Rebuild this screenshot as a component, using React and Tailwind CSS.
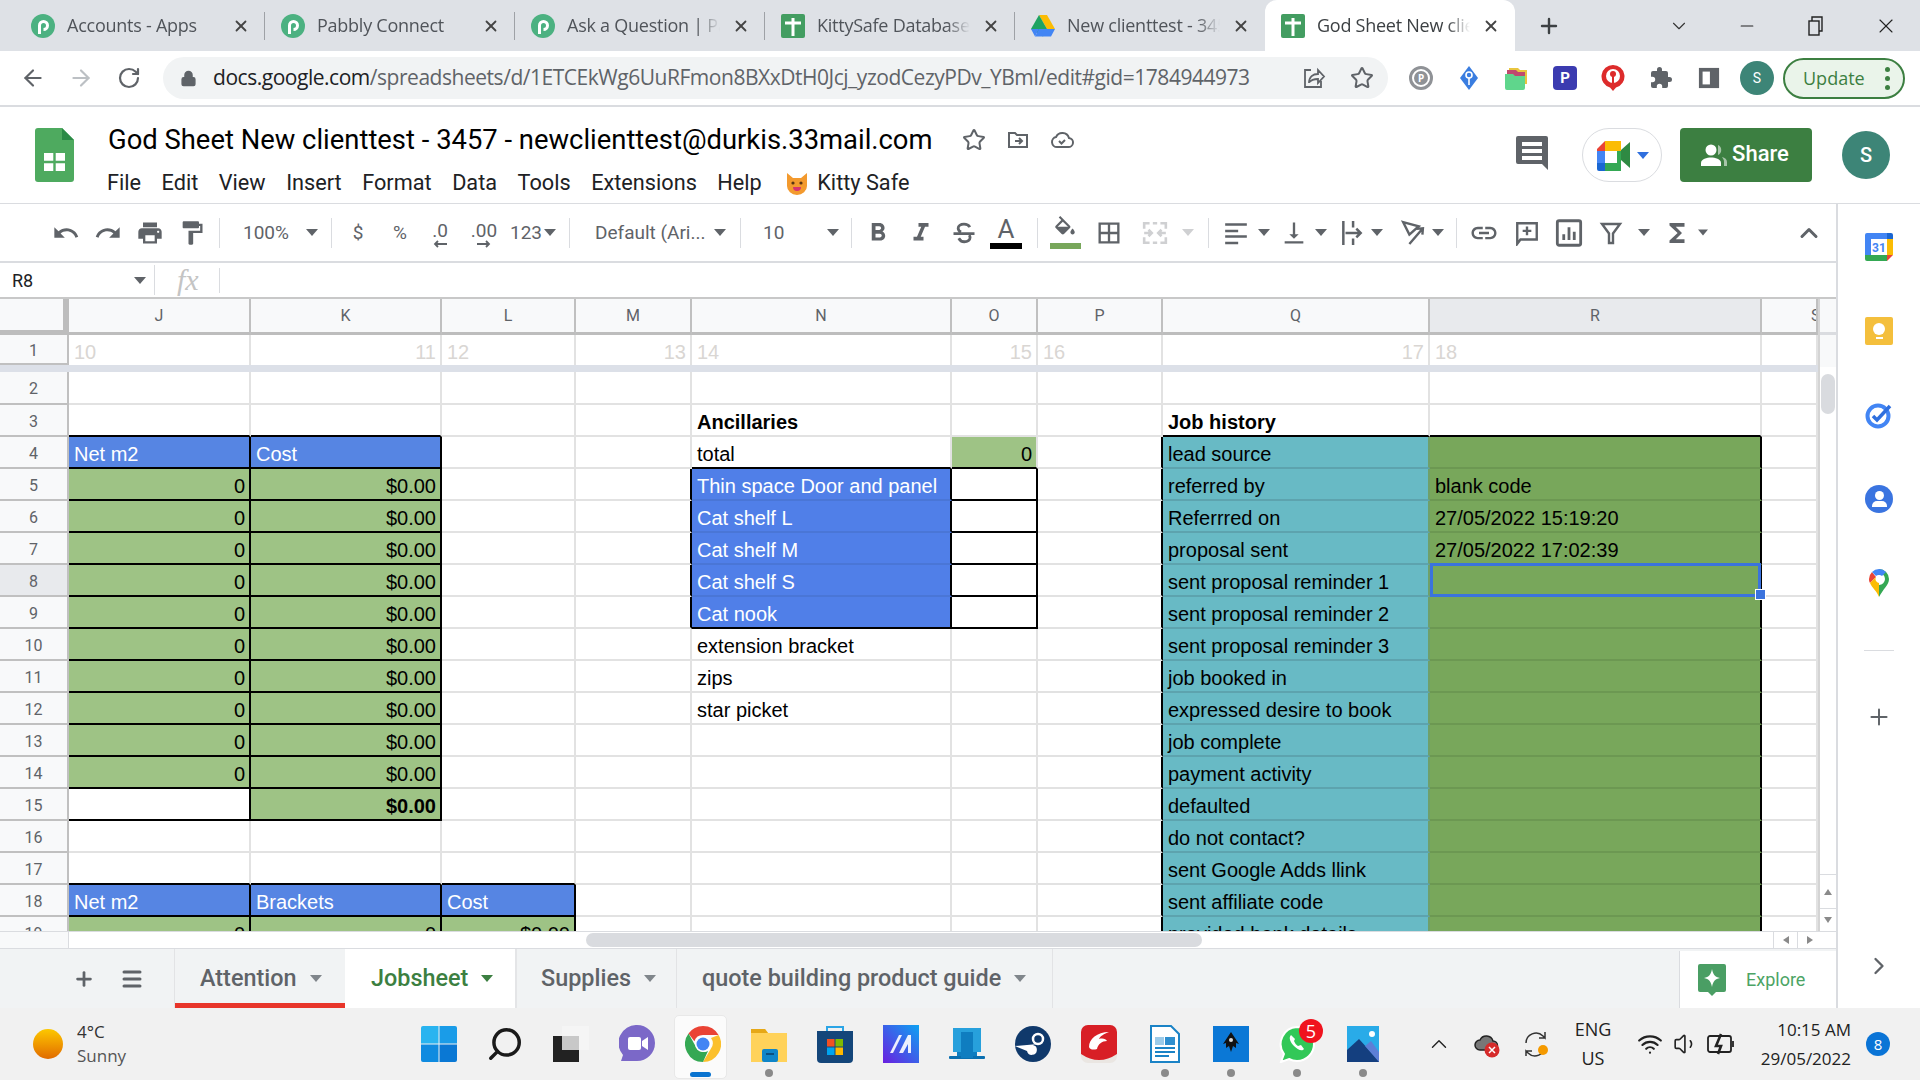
import React from "react";
import { Plus, X, ChevronDown, ChevronUp, ChevronRight, Minus, ArrowLeft, ArrowRight, RotateCw, Star, Lock, Search, Wifi, Volume1, Menu } from "lucide-react";

const ui = "font-['Open_Sans',sans-serif]";
const rob = "font-['Roboto',sans-serif]";
const ar = "font-['Liberation_Sans',Arial,sans-serif]";

// ---------- small drawn icons ----------
const M = ({ d, className = "w-[24px] h-[24px]", fill = "#5f6368" }) => (
  <svg viewBox="0 0 24 24" className={className} fill={fill}>
    <path d={d} />
  </svg>
);

const Caret = ({ fill = "#5f6368" }) => (
  <svg viewBox="0 0 12 7" className="w-[12px] h-[7px]" fill={fill}>
    <path d="M0 0h12L6 7z" />
  </svg>
);

const TinyArrow = ({ d }) => (
  <svg viewBox="0 0 8 8" className="w-[8px] h-[8px]" fill="#8a8a8a">
    <path d={d} />
  </svg>
);

const Pabbly = () => (
  <svg viewBox="0 0 24 24" className="w-[24px] h-[24px] shrink-0">
    <circle cx="12" cy="12" r="12" fill="#4cb181" />
    <path d="M8.5 20V11.5a4 4 0 1 1 4 4" fill="none" stroke="#fff" strokeWidth="3" />
  </svg>
);

const SheetFav = () => (
  <svg viewBox="0 0 24 24" className="w-[24px] h-[24px] shrink-0">
    <rect width="24" height="24" rx="2" fill="#439d61" />
    <path d="M4 9h16M12 4v18" stroke="#fff" strokeWidth="3" />
  </svg>
);

const Drive = () => (
  <svg viewBox="0 0 24 22" className="w-[24px] h-[24px] shrink-0">
    <path d="M8 0h8l8 14h-8z" fill="#fbbc04" />
    <path d="M8 0l8 14-4 7.5L0 14z" fill="#1ea362" />
    <path d="M4 21.5L8 14h16l-4 7.5z" fill="#4285f4" />
    <path d="M0 14h8l-4 7.5z" fill="#4285f4" />
  </svg>
);

const Tab = ({ icon, title, active, sep = true }) => (
  <div className={`w-[250px] h-[51px] shrink-0 relative flex items-center pl-[16px] ${active ? "bg-white rounded-t-[12px]" : ""}`}>
    {icon}
    <div className={`ml-[12px] w-[153px] overflow-hidden whitespace-nowrap text-[18px] tracking-[-0.25px] [mask-image:linear-gradient(to_right,black_85%,transparent)] ${ui} ${active ? "text-[#3c4043]" : "text-[#50545a]"}`}>{title}</div>
    <X size={18} strokeWidth={2.4} className="ml-[12px] text-[#444]" />
    {sep && <div className="absolute right-0 top-[12px] w-px h-[28px] bg-[#9ea1a6]" />}
  </div>
);

const Slot = ({ className, children }) => (
  <div className={`h-[42px] flex items-center justify-center shrink-0 ${className}`}>{children}</div>
);

const Sep = ({ className }) => <div className={`w-px h-[30px] bg-[#dadce0] shrink-0 ${className}`} />;

const ToolText = ({ children }) => <span className={`text-[19px] leading-[24px] text-[#5f6368] pt-[1px] ${rob}`}>{children}</span>;

const Ext = ({ children }) => <div className="w-[48px] h-[42px] flex items-center justify-center shrink-0">{children}</div>;

// ---------- spreadsheet data ----------
const cols = ["J", "K", "L", "M", "N", "O", "P", "Q", "R", "S"];
const rowNums = Array.from({ length: 19 }, (_, i) => i + 1);
const jobLabels = {
  4: "lead source", 5: "referred by", 6: "Referrred on", 7: "proposal sent", 8: "sent proposal reminder 1",
  9: "sent proposal reminder 2", 10: "sent proposal reminder 3", 11: "job booked in", 12: "expressed desire to book",
  13: "job complete", 14: "payment activity", 15: "defaulted", 16: "do not contact?", 17: "sent Google Adds llink",
  18: "sent affiliate code", 19: "provided bank details",
};

const cellInfo = (c, r) => {
  const info = { text: "", bg: "", right: false, fg: "text-black", bold: false };
  const inTop = r >= 4 && r <= 15;
  const inLow = r === 18 || r === 19;
  if (c === "J" || c === "K") {
    if (r === 4 || r === 18) { info.bg = "bg-[#5685e3]"; info.fg = "text-white"; }
    if ((r >= 5 && r <= 14) || r === 19) { info.bg = "bg-[#9ec385]"; info.text = c === "K" && r !== 19 ? "$0.00" : "0"; info.right = true; }
  }
  if (c === "J" && (r === 4 || r === 18)) info.text = "Net m2";
  if (c === "K" && r === 4) info.text = "Cost";
  if (c === "K" && r === 18) info.text = "Brackets";
  if (c === "K" && r === 15) { info.bg = "bg-[#9ec385]"; info.text = "$0.00"; info.right = true; info.bold = true; }
  if (c === "L" && r === 18) { info.bg = "bg-[#5685e3]"; info.fg = "text-white"; info.text = "Cost"; }
  if (c === "L" && r === 19) { info.bg = "bg-[#9ec385]"; info.text = "$0.00"; info.right = true; }
  if (c === "N") {
    if (r === 3) { info.text = "Ancillaries"; info.bold = true; }
    if (r === 4) info.text = "total";
    if (r >= 5 && r <= 9) {
      info.bg = "bg-[#507fe8]"; info.fg = "text-white";
      info.text = ["Thin space Door and panel", "Cat shelf L", "Cat shelf M", "Cat shelf S", "Cat nook"][r - 5];
    }
    if (r === 10) info.text = "extension bracket";
    if (r === 11) info.text = "zips";
    if (r === 12) info.text = "star picket";
  }
  if (c === "O" && r === 4) { info.bg = "bg-[#9ec385]"; info.text = "0"; info.right = true; }
  if (c === "Q") {
    if (r === 3) { info.text = "Job history"; info.bold = true; }
    if (r >= 4) { info.bg = "bg-[#68bac5]"; info.text = jobLabels[r]; }
  }
  if (c === "R" && r >= 4) {
    info.bg = "bg-[#78a75b]";
    if (r === 5) info.text = "blank code";
    if (r === 6) info.text = "27/05/2022 15:19:20";
    if (r === 7) info.text = "27/05/2022 17:02:39";
  }
  // border colours
  let rb = "border-r-[#e2e2e2]";
  let bb = "border-b-[#e2e2e2]";
  if (c === "Q" && r >= 4) { rb = "border-r-[#6fa06a]"; bb = "border-b-[#5da3ae]"; }
  if (c === "R" && r >= 4) { bb = "border-b-[#6c9852]"; }
  if (c === "N" && r >= 5 && r <= 8) bb = "border-b-[#4a76d6]";
  const blackRight =
    ((c === "J" || c === "K") && (inTop || inLow)) || (c === "L" && inLow) || (c === "M" && r >= 5 && r <= 9) ||
    ((c === "N" || c === "O") && r >= 5 && r <= 9) || (c === "P" && r >= 4) || (c === "R" && r >= 4);
  const blackBottom =
    ((c === "J" || c === "K") && (r === 3 || (r >= 4 && r <= 15) || r === 17 || r === 18)) ||
    (c === "L" && (r === 17 || r === 18)) || ((c === "N" || c === "O") && r === 4) || (c === "N" && r === 9) ||
    (c === "O" && r >= 5 && r <= 9) || ((c === "Q" || c === "R") && r === 3);
  if (blackRight) rb = "border-r-black";
  if (blackBottom) bb = "border-b-black";
  return { ...info, rb, bb };
};

const rowHeight = (r) => (r === 1 ? "h-[30px]" : r === 2 ? "h-[33px]" : "h-[32px]");

const Grid = () => (
  <div className="h-[632px] w-[1818px] overflow-hidden grid grid-cols-[69px_182px_191px_134px_116px_260px_86px_125px_267px_332px_56px] auto-rows-min">
    <div className="h-[36px] bg-[#f8f9fa] border-r-[6px] border-b-[5px] border-[#bdbdbd]" />
    {cols.map((c) => (
      <div
        key={c}
        className={`h-[36px] flex items-center overflow-hidden border-r-2 border-b-[3px] border-r-[#c0c0c0] border-b-[#bdbdbd] text-[16px] text-[#5f6368] ${rob} ${c === "R" ? "bg-[#e8eaed]" : "bg-[#f8f9fa]"} ${c === "S" ? "justify-start pl-[49px] border-r-0" : "justify-center"}`}
      >
        {c}
      </div>
    ))}
    {rowNums.map((r) => (
      <React.Fragment key={r}>
        {r === 2 && <div className="col-span-11 h-[7px] bg-[#dce0e8]" />}
        <div className={`${rowHeight(r)} flex items-center justify-center pt-[3px] border-r-2 border-b-2 border-[#c0c0c0] text-[16px] text-[#5f6368] ${rob} ${r === 8 ? "bg-[#e8eaed]" : "bg-[#f8f9fa]"}`}>
          {r}
        </div>
        {cols.map((c, ci) => {
          if (r === 1) {
            const n = 10 + ci;
            return (
              <div key={c} className={`h-[30px] flex items-end pb-[1px] overflow-hidden border-r-2 border-[#e2e2e2] text-[20px] leading-[24px] text-[#d9d6d3] ${ar} ${ci % 2 ? "justify-end pr-[4px]" : "pl-[5px]"}`}>
                {c === "S" ? "" : n}
              </div>
            );
          }
          const cell = cellInfo(c, r);
          return (
            <div
              key={c}
              className={`${rowHeight(r)} relative flex items-end pb-[1px] whitespace-nowrap border-r-2 border-b-2 text-[20px] leading-[24px] ${ar} ${cell.bg} ${cell.fg} ${cell.rb} ${cell.bb} ${cell.right ? "justify-end pr-[4px]" : "pl-[5px]"} ${cell.bold ? "font-bold" : ""}`}
            >
              {cell.text}
              {c === "R" && r === 8 && (
                <>
                  <div className="absolute -top-[2px] left-0 right-[-1px] bottom-[-2px] border-[3px] border-[#3b73dd]" />
                  <div className="absolute right-[-6px] bottom-[-5px] w-[11px] h-[11px] bg-[#3b73dd] border border-white z-10" />
                </>
              )}
            </div>
          );
        })}
      </React.Fragment>
    ))}
  </div>
);

const TaskIcon = ({ dot, active, children }) => (
  <div className="relative w-[66px] h-[72px] flex items-center justify-center shrink-0">
    {active && <div className="absolute left-[4px] right-[9px] top-[7px] bottom-[1px] rounded-[5px] bg-[#fbfbfb] border border-[#e8e8e8]" />}
    <div className="relative w-[38px] h-[38px] flex items-center justify-center">{children}</div>
    {dot && <div className="absolute bottom-[3px] left-[29px] w-[8px] h-[8px] rounded-full bg-[#8a8a8a]" />}
    {active && <div className="absolute bottom-[3px] left-[20px] w-[21px] h-[5px] rounded-[3px] bg-[#0a74d0]" />}
  </div>
);

export default function App() {
  return (
    <div className="w-[1920px] h-[1080px] overflow-hidden flex flex-col bg-white">
      {/* chrome tabs */}
      <div className="h-[51px] shrink-0 bg-[#dee1e6] flex items-center pl-[15px]">
        <Tab icon={<Pabbly />} title="Accounts - Apps" />
        <Tab icon={<Pabbly />} title="Pabbly Connect" />
        <Tab icon={<Pabbly />} title="Ask a Question | Pabbly" />
        <Tab icon={<SheetFav />} title="KittySafe Database" />
        <Tab icon={<Drive />} title="New clienttest - 3457" sep={false} />
        <Tab icon={<SheetFav />} title="God Sheet New clienttest" active sep={false} />
        <Plus size={24} strokeWidth={2.4} className="ml-[22px] text-[#3c4043]" />
        <ChevronDown size={22} strokeWidth={1.2} className="ml-[107px] text-[#333]" />
        <Minus size={20} strokeWidth={1.3} className="ml-[47px] text-[#222]" />
        <svg viewBox="0 0 16 20" className="w-[16px] h-[22px] ml-[51px]" fill="none" stroke="#222" strokeWidth="1.4">
          <rect x="1" y="5" width="10" height="14" />
          <path d="M4 5V1h10v14h-3" />
        </svg>
        <X size={24} strokeWidth={1.1} className="ml-[50px] text-[#222]" />
      </div>

      {/* address bar */}
      <div className="h-[56px] shrink-0 bg-white border-b-2 border-[#dadce0] flex items-center">
        <ArrowLeft size={26} strokeWidth={2} className="ml-[20px] text-[#5f6368]" />
        <ArrowRight size={26} strokeWidth={2} className="ml-[22px] text-[#bcc0c4]" />
        <RotateCw size={24} strokeWidth={2.2} className="ml-[23px] text-[#5f6368]" />
        <div className="ml-[22px] w-[1225px] h-[42px] rounded-full bg-[#f1f3f4] flex items-center shrink-0">
          <Lock size={17} fill="#5f6368" strokeWidth={2} className="ml-[17px] text-[#5f6368]" />
          <div className={`ml-[16px] text-[21px] whitespace-nowrap tracking-[-0.47px] text-[#5f6368] ${ui}`}>
            <span className="text-[#202124]">docs.google.com</span>/spreadsheets/d/1ETCEkWg6UuRFmon8BXxDtH0Jcj_yzodCezyPDv_YBmI/edit#gid=1784944973
          </div>
          <div className="ml-auto flex pr-[2px]">
            <Ext>
              <svg viewBox="0 0 24 24" className="w-[24px] h-[24px]" fill="none" stroke="#5f6368" strokeWidth="1.8">
                <path d="M9 4H3v17h16v-6" />
                <path d="M7 17c0-6 4-9 9-9V4l6 6.500-6 6.500v-4c-4 0-7 1-9 3.500z" />
              </svg>
            </Ext>
            <Ext><Star size={24} strokeWidth={2} className="text-[#5f6368]" /></Ext>
          </div>
        </div>
        <div className="ml-[9px] flex items-center">
          <Ext>
            <div className="w-[24px] h-[24px] rounded-full border-[3px] border-[#8f9296] bg-white flex items-center justify-center">
              <div className="w-[14px] h-[14px] rounded-full bg-[#8f9296] text-white text-[10px] font-bold leading-[14px] text-center">P</div>
            </div>
          </Ext>
          <Ext>
            <svg viewBox="0 0 24 24" className="w-[24px] h-[24px]">
              <path d="M12 0l9 12-9 12-9-12z" fill="#3a7de0" />
              <circle cx="12" cy="9" r="3" fill="none" stroke="#fff" strokeWidth="1.600" />
              <path d="M12 12v7" stroke="#fff" strokeWidth="1.600" />
            </svg>
          </Ext>
          <Ext>
            <svg viewBox="0 0 24 24" className="w-[24px] h-[24px]">
              <path d="M4 2h9l2 2h7v14H4z" fill="#e9c53f" />
              <path d="M2 4h9l2 2h7v14H2z" fill="#c04a6e" />
              <path d="M0 8h8l2 2h10v12a2 2 0 0 1-2 2H2a2 2 0 0 1-2-2z" fill="#5fd68c" />
            </svg>
          </Ext>
          <Ext>
            <div className={`w-[24px] h-[24px] rounded-[4px] bg-[#3b3bb0] text-white text-[15px] font-bold flex items-center justify-center ${rob}`}>P</div>
          </Ext>
          <Ext>
            <svg viewBox="0 0 24 26" className="w-[24px] h-[26px]">
              <path d="M12 0a11.500 11.500 0 0 1 3 22.600L12 26l-3-3.400A11.500 11.500 0 0 1 12 0z" fill="#dd2b2b" />
              <circle cx="12" cy="11" r="7" fill="#fff" />
              <circle cx="12" cy="9" r="3" fill="#dd2b2b" />
              <path d="M12 11v7" stroke="#dd2b2b" strokeWidth="2" />
            </svg>
          </Ext>
          <Ext>
            <svg viewBox="0 0 24 24" className="w-[24px] h-[24px]" fill="#5f6368">
              <path d="M20.500 11H19V7a2 2 0 0 0-2-2h-4V3.500a2.500 2.500 0 0 0-5 0V5H4a2 2 0 0 0-2 2v3.800h1.500a2.700 2.700 0 0 1 0 5.400H2V20a2 2 0 0 0 2 2h3.800v-1.500a2.700 2.700 0 0 1 5.400 0V22H17a2 2 0 0 0 2-2v-4h1.500a2.500 2.500 0 0 0 0-5z" />
            </svg>
          </Ext>
          <Ext>
            <svg viewBox="0 0 24 24" className="w-[22px] h-[24px]">
              <path d="M1 1h22v22H1z" fill="#5f6368" />
              <path d="M5 5h8v14H5z" fill="#fff" />
            </svg>
          </Ext>
          <Ext>
            <div className={`w-[34px] h-[34px] rounded-full bg-[#3d8577] text-white text-[14px] flex items-center justify-center ${rob}`}>S</div>
          </Ext>
          <div className="ml-[2px] w-[122px] h-[41px] rounded-full border-2 border-[#3c7f41] bg-[#eaf4ea] flex items-center pl-[18px] shrink-0">
            <span className={`text-[18px] text-[#3c7f41] ${ui}`}>Update</span>
            <div className="ml-[20px] flex flex-col gap-[4px]">
              <div className="w-[5px] h-[5px] rounded-full bg-[#3c7f41]" />
              <div className="w-[5px] h-[5px] rounded-full bg-[#3c7f41]" />
              <div className="w-[5px] h-[5px] rounded-full bg-[#3c7f41]" />
            </div>
          </div>
        </div>
      </div>

      {/* title row */}
      <div className="h-[97px] shrink-0 border-b border-[#dadce0] flex">
        <svg viewBox="0 0 39 54" className="w-[39px] h-[54px] ml-[35px] mt-[21px] shrink-0">
          <path d="M3 0h24l12 12v39a3 3 0 0 1-3 3H3a3 3 0 0 1-3-3V3a3 3 0 0 1 3-3z" fill="#4eaa5f" />
          <path d="M27 0l12 12H27z" fill="#2b8a46" />
          <path d="M9 25h21v18H9z" fill="#fff" />
          <path d="M9 34h21M19.5 25v18" stroke="#4eaa5f" strokeWidth="2.4" />
        </svg>
        <div className="ml-[34px] pt-[15px] flex flex-col">
          <div className="flex items-center">
            <div className={`text-[27.4px] leading-[36px] text-black whitespace-nowrap ${rob}`}>
              God Sheet New clienttest - 3457 - newclienttest@durkis.33mail.com
            </div>
            <Star size={24} strokeWidth={2} className="ml-[29px] text-[#5f6368]" />
            <svg viewBox="0 0 24 24" className="w-[24px] h-[24px] ml-[20px]" fill="none" stroke="#5f6368" strokeWidth="2">
              <path d="M3 19V5h6l2 2h10v12z" />
              <path d="M9 13h7m-3-3l3 3-3 3" />
            </svg>
            <svg viewBox="0 0 24 24" className="w-[26px] h-[24px] ml-[19px]" fill="none" stroke="#5f6368" strokeWidth="2">
              <path d="M7 19a5 5 0 0 1-1-9.900A7 7 0 0 1 19 10a4.500 4.500 0 0 1-1 9z" />
              <path d="M9 13l2.500 2.500L15 12" />
            </svg>
          </div>
          <div className={`mt-[7px] -ml-[1px] flex gap-[20.5px] text-[21.7px] leading-[36px] text-[#202124] whitespace-nowrap ${rob}`}>
            <span>File</span>
            <span>Edit</span>
            <span>View</span>
            <span>Insert</span>
            <span>Format</span>
            <span>Data</span>
            <span>Tools</span>
            <span>Extensions</span>
            <span>Help</span>
            <span className="flex items-center gap-[8px] ml-[3px]">
              <svg viewBox="0 0 24 24" className="w-[24px] h-[26px]">
                <path d="M2 2l6 5h8l6-5v13a10 9 0 0 1-20 0z" fill="#f39a2e" />
                <circle cx="8" cy="12" r="1.600" fill="#5a3412" />
                <circle cx="16" cy="12" r="1.600" fill="#5a3412" />
                <path d="M8 16h8a4 4 0 0 1-8 0z" fill="#d8326e" />
              </svg>
              Kitty Safe
            </span>
          </div>
        </div>
        <div className="ml-auto flex items-start pt-[21px]">
          <svg viewBox="0 0 32 34" className="w-[32px] h-[34px] mt-[8px]" fill="#5f6368">
            <path d="M2 0h28a2 2 0 0 1 2 2v32l-6-6H2a2 2 0 0 1-2-2V2a2 2 0 0 1 2-2zM6 6v4h20V6zm0 7v4h20v-4zm0 7v4h20v-4z" fillRule="evenodd" />
          </svg>
          <div className="ml-[34px] w-[80px] h-[54px] rounded-[27px] border border-[#dadce0] flex items-center justify-center gap-[6px]">
            <svg viewBox="0 0 36 36" className="w-[36px] h-[36px]">
              <path d="M10 4h16v10H10z" fill="#fbbc04" />
              <path d="M2 12L10 4v10H2z" fill="#ea4335" />
              <path d="M2 14h8v12H2z" fill="#4285f4" />
              <path d="M2 26h8v8H4a2 2 0 0 1-2-2z" fill="#1967d2" />
              <path d="M10 26h16v8H10z" fill="#34a853" />
              <path d="M22 14h4v12h-4z" fill="#34a853" />
              <path d="M26 13l9-8v26l-9-8z" fill="#2f8a43" />
            </svg>
            <Caret fill="#2f6fde" />
          </div>
          <div className="ml-[18px] w-[132px] h-[54px] rounded-[4px] bg-[#3c7f41] flex items-center justify-center gap-[5px] pr-[2px]">
            <svg viewBox="0 0 26 24" className="w-[26px] h-[24px]" fill="#fff">
              <circle cx="10" cy="7" r="5.500" />
              <path d="M0 23v-3c0-4 6-5.500 10-5.500s10 1.500 10 5.500v3z" />
              <path d="M17 2a5.500 5.500 0 0 1 0 10zM21 14c3 .8 5 2.500 5 5v4h-3v-4c0-2-1-3.500-2-5z" opacity=".55" />
            </svg>
            <span className={`text-[22px] leading-[26px] pb-[3px] font-medium text-white ${rob}`}>Share</span>
          </div>
          <div className="ml-[30px] mr-[30px] mt-[3px] w-[48px] h-[48px] rounded-full bg-[#3d8577] flex items-center justify-center text-white text-[20px] font-medium">
            <span className={rob}>S</span>
          </div>
        </div>
      </div>

      {/* main */}
      <div className="h-[804px] flex shrink-0">
        <div className="w-[1836px] shrink-0 flex flex-col">
          {/* toolbar */}
          <div className="h-[59px] shrink-0 border-b-2 border-[#dadce0] flex items-center pl-[45px]">
            <Slot className="w-[42px]"><M d="M12.5 8c-2.65 0-5.05.99-6.9 2.6L2 7v9h9l-3.62-3.62c1.39-1.16 3.16-1.88 5.12-1.88 3.54 0 6.55 2.31 7.6 5.5l2.37-.78C21.08 11.03 17.15 8 12.5 8z" className="w-[28px] h-[28px]" /></Slot>
            <Slot className="w-[42px]"><M d="M18.4 10.6C16.55 8.99 14.15 8 11.5 8c-4.65 0-8.58 3.03-9.96 7.22L3.9 16c1.05-3.19 4.05-5.5 7.6-5.5 1.95 0 3.73.72 5.12 1.88L13 16h9V7l-3.6 3.6z" className="w-[28px] h-[28px]" /></Slot>
            <Slot className="w-[42px]"><M d="M19 8H5c-1.66 0-3 1.34-3 3v6h4v4h12v-4h4v-6c0-1.66-1.34-3-3-3zm-3 11H8v-5h8v5zm3-7c-.55 0-1-.45-1-1s.45-1 1-1 1 .45 1 1-.45 1-1 1zm-1-9H6v4h12V3z" className="w-[28px] h-[28px]" /></Slot>
            <Slot className="w-[42px]"><M d="M18 4V3c0-.55-.45-1-1-1H5c-.55 0-1 .45-1 1v4c0 .55.45 1 1 1h12c.55 0 1-.45 1-1V6h1v4H9v11c0 .55.45 1 1 1h2c.55 0 1-.45 1-1v-9h8V4h-3z" className="w-[28px] h-[28px]" /></Slot>
            <Sep className="ml-[6px]" />
            <Slot className="w-[80px] justify-start! pl-[23px]"><ToolText>100%</ToolText></Slot>
            <Slot className="w-[24px]"><Caret /></Slot>
            <Sep className="ml-[7px]" />
            <Slot className="w-[42px] ml-[5px]"><ToolText>$</ToolText></Slot>
            <Slot className="w-[42px]"><ToolText>%</ToolText></Slot>
            <Slot className="w-[38px]">
              <div className="flex flex-col items-center">
                <ToolText>.0</ToolText>
                <svg viewBox="0 0 14 8" className="w-[14px] h-[8px] -mt-[3px]" fill="none" stroke="#5f6368" strokeWidth="1.800"><path d="M14 4H2m3-3L2 4l3 3" /></svg>
              </div>
            </Slot>
            <Slot className="w-[50px]">
              <div className="flex flex-col items-center">
                <ToolText>.00</ToolText>
                <svg viewBox="0 0 14 8" className="w-[14px] h-[8px] -mt-[3px]" fill="none" stroke="#5f6368" strokeWidth="1.800"><path d="M0 4h12M9 1l3 3-3 3" /></svg>
              </div>
            </Slot>
            <Slot className="w-[34px]"><ToolText>123</ToolText></Slot>
            <Slot className="w-[14px]"><Caret /></Slot>
            <Sep className="ml-[12px]" />
            <Slot className="w-[138px] justify-start! pl-[25px]"><ToolText>Default (Ari...</ToolText></Slot>
            <Slot className="w-[24px]"><Caret /></Slot>
            <Sep className="ml-[8px]" />
            <Slot className="w-[80px] justify-start! pl-[22px]"><ToolText>10</ToolText></Slot>
            <Slot className="w-[24px]"><Caret /></Slot>
            <Sep className="ml-[6px]" />
            <Slot className="w-[42px] ml-[5px]"><M d="M15.6 10.79c.97-.67 1.65-1.77 1.65-2.79 0-2.26-1.75-4-4-4H7v14h7.04c2.09 0 3.71-1.7 3.71-3.79 0-1.52-.86-2.82-2.15-3.42zM10 6.5h3c.83 0 1.5.67 1.5 1.5s-.67 1.5-1.5 1.5h-3v-3zm3.5 9H10v-3h3.500c.83 0 1.5.67 1.5 1.5s-.67 1.5-1.5 1.5z" className="w-[30px] h-[30px]" /></Slot>
            <Slot className="w-[43px]"><M d="M10 4v3h2.21l-3.42 8H6v3h8v-3h-2.21l3.42-8H18V4z" className="w-[30px] h-[30px]" /></Slot>
            <Slot className="w-[43px]">
              <svg viewBox="0 0 24 24" className="w-[28px] h-[28px]" fill="none" stroke="#5f6368" strokeWidth="2.400">
                <path d="M17 7c-1-1.800-2.800-2.600-5-2.600-3 0-5 1.500-5 3.600 0 1.500.8 2.500 2.500 3.200M7.500 16.500c1 2 2.600 3 4.700 3 3 0 5-1.500 5-3.600 0-.8-.3-1.500-.8-2.100M3 12.500h18" />
              </svg>
            </Slot>
            <Slot className="w-[42px]">
              <div className="flex flex-col items-center">
                <span className={`text-[26px] leading-[26px] text-[#5f6368] ${rob}`}>A</span>
                <div className="w-[32px] h-[6px] bg-black mt-[1px]" />
              </div>
            </Slot>
            <Sep className="ml-[10px]" />
            <Slot className="w-[42px] ml-[6px]">
              <div className="flex flex-col items-center">
                <M d="M16.56 8.94L7.62 0 6.21 1.41l2.38 2.38-5.15 5.15c-.59.59-.59 1.54 0 2.12l5.5 5.5c.29.29.68.44 1.06.44s.77-.15 1.06-.44l5.5-5.5c.59-.58.59-1.53 0-2.12zM5.21 10L10 5.21 14.79 10H5.210zM19 11.500s-2 2.170-2 3.500c0 1.100.9 2 2 2s2-.9 2-2c0-1.330-2-3.500-2-3.500z" className="w-[26px] h-[26px]" />
                <div className="w-[31px] h-[6px] bg-[#78a75b] mt-[1px]" />
              </div>
            </Slot>
            <Slot className="w-[42px] ml-[2px]"><M d="M3 3v18h18V3H3zm8 16H5v-6h6v6zm0-8H5V5h6v6zm8 8h-6v-6h6v6zm0-8h-6V5h6v6z" className="w-[28px] h-[28px]" /></Slot>
            <Slot className="w-[42px] ml-[4px]">
              <svg viewBox="0 0 24 24" className="w-[26px] h-[26px]" fill="none" stroke="#cfd0d2" strokeWidth="2.400">
                <path d="M2 8V3h5m10 0h5v5M2 16v5h5m10 0h5v-5M2 12h7m-3-3l3 3-3 3M22 12h-7m3-3l-3 3 3 3M10 3h4M10 21h4" />
              </svg>
            </Slot>
            <Slot className="w-[24px]"><Caret fill="#cfd0d2" /></Slot>
            <Sep className="ml-[8px]" />
            <Slot className="w-[42px] ml-[6px]"><M d="M2 3h20v2.400H2zM2 9h12v2.400H2zM2 14h20v2.400H2zM2 20h12v2.400H2z" className="w-[26px] h-[26px]" /></Slot>
            <Slot className="w-[14px]"><Caret /></Slot>
            <Slot className="w-[42px] ml-[2px]"><M d="M16 13h-3V3h-2v10H8l4 4 4-4zM4 19v2h16v-2H4z" className="w-[28px] h-[28px]" /></Slot>
            <Slot className="w-[12px]"><Caret /></Slot>
            <Slot className="w-[34px] ml-[8px]">
              <svg viewBox="0 0 24 24" className="w-[26px] h-[26px]" fill="none" stroke="#5f6368" strokeWidth="2.300">
                <path d="M4 1v22M13 1v6M13 17v6M6 12h14m-4-4l4 4-4 4" />
              </svg>
            </Slot>
            <Slot className="w-[16px]"><Caret /></Slot>
            <Slot className="w-[40px] ml-[7px]">
              <svg viewBox="0 0 24 24" className="w-[25px] h-[25px]" fill="none" stroke="#5f6368" strokeWidth="2.300">
                <path d="M3 2l15 4-9 8zM9 23L22 8m-6 .5l6-.5-.5 6" />
              </svg>
            </Slot>
            <Slot className="w-[12px]"><Caret /></Slot>
            <Sep className="ml-[12px]" />
            <Slot className="w-[42px] ml-[6px]"><M d="M3.900 12c0-1.710 1.390-3.100 3.100-3.100h4V7H7c-2.760 0-5 2.240-5 5s2.240 5 5 5h4v-1.900H7c-1.710 0-3.100-1.390-3.100-3.100zM8 13h8v-2H8v2zm9-6h-4v1.900h4c1.710 0 3.100 1.390 3.100 3.100s-1.390 3.100-3.100 3.100h-4V17h4c2.760 0 5-2.240 5-5s-2.240-5-5-5z" className="w-[30px] h-[30px]" /></Slot>
            <Slot className="w-[43px]">
              <svg viewBox="0 0 24 24" className="w-[26px] h-[26px]" fill="none" stroke="#5f6368" strokeWidth="2.200">
                <path d="M3 22V3h18v15H6zM12 6v8M8 10h8" />
              </svg>
            </Slot>
            <Slot className="w-[42px]">
              <svg viewBox="0 0 24 24" className="w-[28px] h-[30px]" fill="none" stroke="#5f6368" strokeWidth="2.400">
                <rect x="2" y="1.500" width="20" height="21" rx="1.500" />
                <path d="M7.500 18v-5M12 18V7M16.500 18v-7" />
              </svg>
            </Slot>
            <Slot className="w-[42px]">
              <svg viewBox="0 0 24 24" className="w-[24px] h-[24px]" fill="none" stroke="#5f6368" strokeWidth="2.400">
                <path d="M3 3h18l-7 9.500V22h-4v-9.500z" />
              </svg>
            </Slot>
            <Slot className="w-[24px]"><Caret /></Slot>
            <Slot className="w-[42px]"><M d="M18 4H6v2l6.500 6L6 18v2h12v-3h-7l5-5-5-5h7z" className="w-[30px] h-[30px]" /></Slot>
            <Slot className="w-[10px]"><Caret /></Slot>
            <Slot className="w-[40px] ml-[81px]"><ChevronUp size={28} strokeWidth={2.600} className="text-[#5f6368]" /></Slot>
          </div>

          {/* formula bar */}
          <div className="h-[36px] shrink-0 border-b-2 border-[#c8c8c8] flex items-center">
            <span className={`ml-[12px] w-[122px] text-[18px] text-[#202124] ${rob}`}>R8</span>
            <Caret />
            <div className="ml-[8px] w-px h-[30px] bg-[#dadce0]" />
            <span className="ml-[22px] w-[42px] text-[30px] italic text-[#c4c4c4] font-['Liberation_Serif',serif] leading-[30px]">fx</span>
            <div className="w-px h-[25px] bg-[#dadce0]" />
          </div>

          {/* sheet + vertical scrollbar */}
          <div className="h-[632px] shrink-0 flex">
            <Grid />
            <div className="w-[18px] shrink-0 border-l-2 border-[#d4d4d4] flex flex-col bg-white">
              <div className="h-[36px] bg-[#f8f9fa] border-b-[3px] border-[#dadce0] shrink-0" />
              <div className="h-[32px] bg-[#f8f9fa] shrink-0" />
              <div className="ml-[1px] mt-[7px] w-[14px] h-[40px] rounded-[7px] bg-[#d9dbdf] shrink-0" />
              <div className="mt-auto h-[34px] border-t border-[#dadce0] flex items-center justify-center shrink-0"><TinyArrow d="M4 1l4 6H0z" /></div>
              <div className="h-[23px] border-t border-[#dadce0] flex items-center justify-center shrink-0"><TinyArrow d="M4 7L0 1h8z" /></div>
            </div>
          </div>

          {/* horizontal scrollbar */}
          <div className="h-[18px] shrink-0 border-t border-b border-[#dadce0] flex items-center bg-white">
            <div className="w-[69px] h-full bg-[#f8f9fa] border-r border-[#dadce0] shrink-0" />
            <div className="ml-[517px] w-[616px] h-[14px] rounded-[7px] bg-[#d9dbdf] shrink-0" />
            <div className="ml-[571px] w-[24px] h-full border-l border-[#dadce0] flex items-center justify-center shrink-0"><TinyArrow d="M1 4l6-4v8z" /></div>
            <div className="w-[24px] h-full border-l border-[#dadce0] flex items-center justify-center shrink-0"><TinyArrow d="M7 4L1 0v8z" /></div>
          </div>

          {/* sheet tabs */}
          <div className={`h-[59px] shrink-0 bg-[#f1f3f4] flex items-stretch text-[23.4px] font-medium text-[#5f6368] whitespace-nowrap ${rob}`}>
            <div className="w-[174px] flex items-center">
              <Plus size={22} strokeWidth={3} className="ml-[73px] text-[#5f6368]" />
              <Menu size={24} strokeWidth={3} className="ml-[25px] text-[#5f6368]" />
            </div>
            <div className="w-[171px] relative flex items-center pl-[25px] gap-[13px] border-l border-[#e2e3e5]">
              Attention <Caret fill="#80868b" />
              <div className="absolute left-0 right-0 bottom-0 h-[5px] bg-[#e8352a]" />
            </div>
            <div className="w-[172px] bg-white flex items-center pl-[26px] gap-[13px] text-[#3c7f41] border-r-2 border-[#e4e5e7]">
              Jobsheet <Caret fill="#3c7f41" />
            </div>
            <div className="w-[160px] flex items-center pl-[24px] gap-[13px] border-r border-[#e2e3e5]">
              Supplies <Caret fill="#80868b" />
            </div>
            <div className="w-[376px] flex items-center pl-[25px] gap-[13px] border-r border-[#e2e3e5]">
              quote building product guide <Caret fill="#80868b" />
            </div>
            <div className="ml-auto w-[157px] bg-white border-l border-[#dadce0] mt-[2px] flex items-center">
              <svg viewBox="0 0 28 32" className="ml-[18px] w-[28px] h-[32px]">
                <path d="M2 0h24a2 2 0 0 1 2 2v24a2 2 0 0 1-2 2h-8l-4 4-4-4H2a2 2 0 0 1-2-2V2a2 2 0 0 1 2-2z" fill="#4a9e64" />
                <path d="M14 5c1 5.500 3 8 8 9-5 1-7 3.500-8 9-1-5.500-3-8-8-9 5-1 7-3.500 8-9z" fill="#fff" />
              </svg>
              <span className="ml-[20px] text-[18px] font-normal text-[#4ca465]">Explore</span>
            </div>
          </div>
        </div>

        {/* side panel */}
        <div className="w-[84px] shrink-0 border-l-2 border-[#dadce0] flex flex-col items-center pt-[29px]">
          <svg viewBox="0 0 28 28" className="w-[28px] h-[28px] shrink-0">
            <rect width="28" height="28" rx="2" fill="#fff" />
            <path d="M0 2a2 2 0 0 1 2-2h20v6H6v16H0z" fill="#4285f4" />
            <path d="M22 0h4a2 2 0 0 1 2 2v4h-6z" fill="#1a66d2" />
            <path d="M22 6h6v16h-6z" fill="#fbbc04" />
            <path d="M0 22h22v6H2a2 2 0 0 1-2-2z" fill="#34a853" />
            <path d="M22 22h6l-6 6z" fill="#ea4335" />
            <text x="14" y="19" textAnchor="middle" fontSize="12" fontWeight="700" fill="#4285f4" fontFamily="Roboto">31</text>
          </svg>
          <div className="mt-[56px] w-[28px] h-[28px] rounded-[2px] bg-[#f4bf3c] flex flex-col items-center justify-center shrink-0">
            <div className="w-[12px] h-[12px] rounded-full bg-white" />
            <div className="w-[7px] h-[2px] bg-white mt-[2px]" />
          </div>
          <svg viewBox="0 0 28 28" className="mt-[56px] w-[28px] h-[28px] shrink-0" fill="none">
            <circle cx="13" cy="15" r="10.500" stroke="#4285f4" strokeWidth="4" />
            <path d="M8 15l4 4 13-14" stroke="#2f6fde" strokeWidth="3.500" />
          </svg>
          <div className="mt-[56px] w-[28px] h-[28px] rounded-full bg-[#3a74e0] flex flex-col items-center justify-center shrink-0">
            <div className="w-[9px] h-[9px] rounded-full bg-white" />
            <div className="w-[15px] h-[6px] rounded-t-[5px] bg-white mt-[1px]" />
          </div>
          <svg viewBox="0 0 20 28" className="mt-[56px] w-[20px] h-[28px] shrink-0">
            <path d="M10 0a10 10 0 0 1 10 10c0 6-6 10-10 18V16a6 6 0 0 0 0-12z" fill="#34a853" />
            <path d="M3 3a10 10 0 0 0-3 7c0 2 .5 3 1 4l6-6z" fill="#ea4335" />
            <path d="M1 14c2 5 7 8 9 14V14a4 4 0 0 1-3-6z" fill="#fbbc04" />
            <path d="M10 0a10 10 0 0 0-7 3l4 4a4 4 0 0 1 3-1zM10 0a10 10 0 0 1 7 3l-4 4a4 4 0 0 0-3-1z" fill="#4285f4" />
          </svg>
          <div className="mt-[53px] w-[30px] h-px bg-[#dadce0] shrink-0" />
          <Plus size={26} strokeWidth={1.8} className="mt-[53px] text-[#5f6368] shrink-0" />
          <ChevronRight size={28} strokeWidth={2} className="mt-auto mb-[28px] text-[#5f6368] shrink-0" />
        </div>
      </div>

      {/* taskbar */}
      <div className="h-[72px] shrink-0 bg-[#f1f1f1] flex items-center">
        <div className="ml-[33px] w-[30px] h-[30px] rounded-full bg-gradient-to-b from-[#fcc800] to-[#e06a00] shrink-0" />
        <div className={`ml-[14px] w-[100px] text-[#333] ${ui}`}>
          <div className="text-[17px] leading-[24px]">4°C</div>
          <div className="text-[17px] leading-[24px] text-[#555]">Sunny</div>
        </div>
        <div className="ml-[229px] flex">
          <TaskIcon>
            <svg viewBox="0 0 36 36" className="w-[36px] h-[36px]">
              <path d="M0 2a2 2 0 0 1 2-2h15.500v17.500H0z" fill="#29b4f0" />
              <path d="M18.500 0H34a2 2 0 0 1 2 2v15.500H18.500z" fill="#1a9ce8" />
              <path d="M0 18.500h17.500V36H2a2 2 0 0 1-2-2z" fill="#0f8be0" />
              <path d="M18.500 18.500H36V34a2 2 0 0 1-2 2H18.500z" fill="#0a78d4" />
            </svg>
          </TaskIcon>
          <TaskIcon><Search size={38} strokeWidth={2.2} className="text-[#1a1a1a] -scale-x-100" /></TaskIcon>
          <TaskIcon>
            <svg viewBox="0 0 36 36" className="w-[36px] h-[36px]">
              <rect x="9" y="0" width="27" height="24" fill="#f5f5f5" />
              <rect x="0" y="10" width="26" height="26" fill="#222" />
              <rect x="9" y="10" width="17" height="14" fill="#c8c8c8" />
            </svg>
          </TaskIcon>
          <TaskIcon>
            <svg viewBox="0 0 36 38" className="w-[36px] h-[38px]">
              <path d="M18 0a18 18 0 0 1 0 36H2l2-6A18 18 0 0 1 18 0z" fill="#7b68c8" />
              <rect x="9" y="12" width="13" height="13" rx="2" fill="#fff" />
              <path d="M23 16l6-4v13l-6-4z" fill="#fff" />
            </svg>
          </TaskIcon>
          <TaskIcon active>
            <svg viewBox="0 0 36 36" className="w-[36px] h-[36px]">
              <path d="M18 0a18 18 0 0 1 15.600 9H18a9 9 0 0 0-8.600 6.300L3.500 7.500A18 18 0 0 1 18 0z" fill="#ea4335" />
              <path d="M33.600 9A18 18 0 0 1 18 36l8-13.500A9 9 0 0 0 26 12z" fill="#fbc02d" />
              <path d="M18 36A18 18 0 0 1 3.500 7.500L11 21a9 9 0 0 0 12 4z" fill="#34a853" />
              <circle cx="18" cy="18" r="8" fill="#fff" />
              <circle cx="18" cy="18" r="6.500" fill="#4285f4" />
            </svg>
          </TaskIcon>
          <TaskIcon dot>
            <svg viewBox="0 0 36 36" className="w-[36px] h-[36px]">
              <path d="M0 3h14l3 4h19v29H0z" fill="#ffd25a" />
              <path d="M0 3h14l3 4H0z" fill="#e6a817" />
              <rect x="11" y="23" width="16" height="13" rx="2" fill="#0f85c8" />
              <rect x="15" y="27" width="8" height="2" fill="#0b4f80" />
            </svg>
          </TaskIcon>
          <TaskIcon>
            <svg viewBox="0 0 36 38" className="w-[36px] h-[38px]">
              <path d="M0 6h36v28a4 4 0 0 1-4 4H4a4 4 0 0 1-4-4z" fill="#14467a" />
              <path d="M10 6V2h16v4" fill="none" stroke="#2ba5e6" strokeWidth="2" />
              <rect x="10" y="14" width="7.500" height="7.500" fill="#f25022" />
              <rect x="18.500" y="14" width="7.500" height="7.500" fill="#7fba00" />
              <rect x="10" y="22.500" width="7.500" height="7.500" fill="#00a4ef" />
              <rect x="18.500" y="22.500" width="7.500" height="7.500" fill="#ffb900" />
            </svg>
          </TaskIcon>
          <TaskIcon>
            <svg viewBox="0 0 36 38" className="w-[36px] h-[38px]">
              <defs>
                <linearGradient id="mp" x1="0" y1="1" x2="1" y2="0">
                  <stop offset="0" stopColor="#6a1fe0" />
                  <stop offset="1" stopColor="#0da2f2" />
                </linearGradient>
              </defs>
              <rect width="36" height="38" fill="url(#mp)" />
              <path d="M7 28L16 10h3L10 28zM16 28l9-18h3v18h-3v-9l-5 9z" fill="#fff" opacity=".9" />
            </svg>
          </TaskIcon>
          <TaskIcon>
            <svg viewBox="0 0 36 36" className="w-[36px] h-[36px]">
              <rect x="4" y="2" width="28" height="24" fill="#27a0dc" />
              <rect x="8" y="26" width="20" height="4" fill="#0f7dc0" />
              <rect x="0" y="30" width="36" height="3" rx="1" fill="#0a6fb0" />
              <rect x="12" y="6" width="12" height="26" fill="#0f7dc0" />
            </svg>
          </TaskIcon>
          <TaskIcon>
            <svg viewBox="0 0 36 36" className="w-[36px] h-[36px]">
              <circle cx="18" cy="18" r="18" fill="#10396b" />
              <circle cx="23" cy="13" r="5" fill="none" stroke="#fff" strokeWidth="2.500" />
              <path d="M0 20l12 5a5 5 0 1 0 6-6l5-1" fill="#fff" />
            </svg>
          </TaskIcon>
          <TaskIcon>
            <svg viewBox="0 0 36 38" className="w-[36px] h-[38px]">
              <rect width="36" height="38" rx="7" fill="#eae6e2" />
              <path d="M0 7a7 7 0 0 1 7-7h22a7 7 0 0 1 7 7v22q-18 12-36 0z" fill="#d81f26" />
              <path d="M8 22c0-8 8-15 20-15-5 2-9 4-10 7 4-1 7 0 8 2-5 0-9 3-10 8-3 1-7 1-8-2z" fill="#fff" />
            </svg>
          </TaskIcon>
          <TaskIcon dot>
            <svg viewBox="0 0 30 38" className="w-[30px] h-[38px]">
              <path d="M1 1h20l8 8v28H1z" fill="#fff" stroke="#1b83c6" strokeWidth="2" />
              <rect x="5" y="12" width="9" height="8" fill="#9ccbe9" />
              <rect x="15" y="12" width="10" height="8" fill="#2f8fcf" />
              <path d="M5 23h20M5 27h20M5 31h14" stroke="#1b83c6" strokeWidth="2" />
            </svg>
          </TaskIcon>
          <TaskIcon dot>
            <svg viewBox="0 0 36 36" className="w-[36px] h-[36px]">
              <rect width="36" height="36" fill="#0b78d6" />
              <path d="M18 6l8 12-3-1v5l-3-2-2 6-2-6-3 2v-5l-3 1z" fill="#111" />
              <circle cx="18" cy="14" r="2" fill="#ddd" />
            </svg>
          </TaskIcon>
          <TaskIcon dot>
            <svg viewBox="0 0 36 38" className="w-[36px] h-[38px]">
              <path d="M18 2a17 17 0 0 1 0 34 17 17 0 0 1-8-2l-8 3 3-8A17 17 0 0 1 18 2z" fill="#32c858" stroke="#fff" strokeWidth="2" />
              <path d="M12 10c-3 3 0 8 3 11s8 6 10 3l-3-4-3 1c-2-1-3-3-4-5l1-2z" fill="#fff" />
            </svg>
            <div className={`absolute -top-[6px] right-[-7px] w-[24px] h-[24px] rounded-full bg-[#f0131e] text-white text-[18px] flex items-center justify-center ${ui}`}>5</div>
          </TaskIcon>
          <TaskIcon dot>
            <svg viewBox="0 0 32 36" className="w-[32px] h-[36px]">
              <rect width="32" height="36" fill="#29abe8" />
              <circle cx="25" cy="8" r="3" fill="#fff" />
              <path d="M0 36V24l12-11 20 22v1z" fill="#143f7f" />
              <path d="M18 20l6-5 8 11v10z" fill="#5d7fd6" />
            </svg>
          </TaskIcon>
        </div>
        <ChevronUp size={26} strokeWidth={1.3} className="ml-[30px] text-[#222] shrink-0" />
        <svg viewBox="0 0 26 28" className="ml-[22px] w-[26px] h-[28px] shrink-0">
          <path d="M6 20a5 5 0 0 1 0-10 7 7 0 0 1 13 1 4.500 4.500 0 0 1 0 9z" fill="#777" stroke="#222" strokeWidth="1.500" />
          <circle cx="18" cy="20" r="7.500" fill="#d62b2b" />
          <path d="M15 17l6 6m0-6l-6 6" stroke="#fff" strokeWidth="1.500" />
        </svg>
        <svg viewBox="0 0 26 30" className="ml-[23px] w-[26px] h-[30px] shrink-0" fill="none" stroke="#333" strokeWidth="1.500">
          <path d="M3 14a10 10 0 0 1 17-7l2 2V3M22 9h-6M22 17a10 10 0 0 1-17 7l-2-2v5M3 22h6" />
          <circle cx="20" cy="21" r="5" fill="#f59a00" stroke="none" />
        </svg>
        <div className={`ml-[24px] w-[40px] flex flex-col items-center text-[18px] leading-[29px] text-[#222] shrink-0 ${ui}`}>
          <div>ENG</div>
          <div>US</div>
        </div>
        <Wifi size={26} strokeWidth={2} className="ml-[24px] text-[#222] shrink-0" />
        <Volume1 size={26} strokeWidth={1.500} className="ml-[10px] text-[#222] shrink-0" />
        <svg viewBox="0 0 28 22" className="ml-[8px] w-[28px] h-[22px] shrink-0" fill="none" stroke="#222" strokeWidth="1.800">
          <rect x="1" y="3" width="23" height="16" rx="2" />
          <path d="M26 8v6" />
          <path d="M14 1l-5 12h5l-3 8" strokeWidth="2.600" />
        </svg>
        <div className={`ml-auto mr-[15px] text-right text-[17px] leading-[29px] text-[#222] whitespace-nowrap ${ui}`}>
          <div>10:15 AM</div>
          <div>29/05/2022</div>
        </div>
        <div className={`mr-[30px] w-[24px] h-[24px] rounded-full bg-[#0a74d6] text-white text-[15px] flex items-center justify-center ${ui}`}>8</div>
      </div>
    </div>
  );
}
